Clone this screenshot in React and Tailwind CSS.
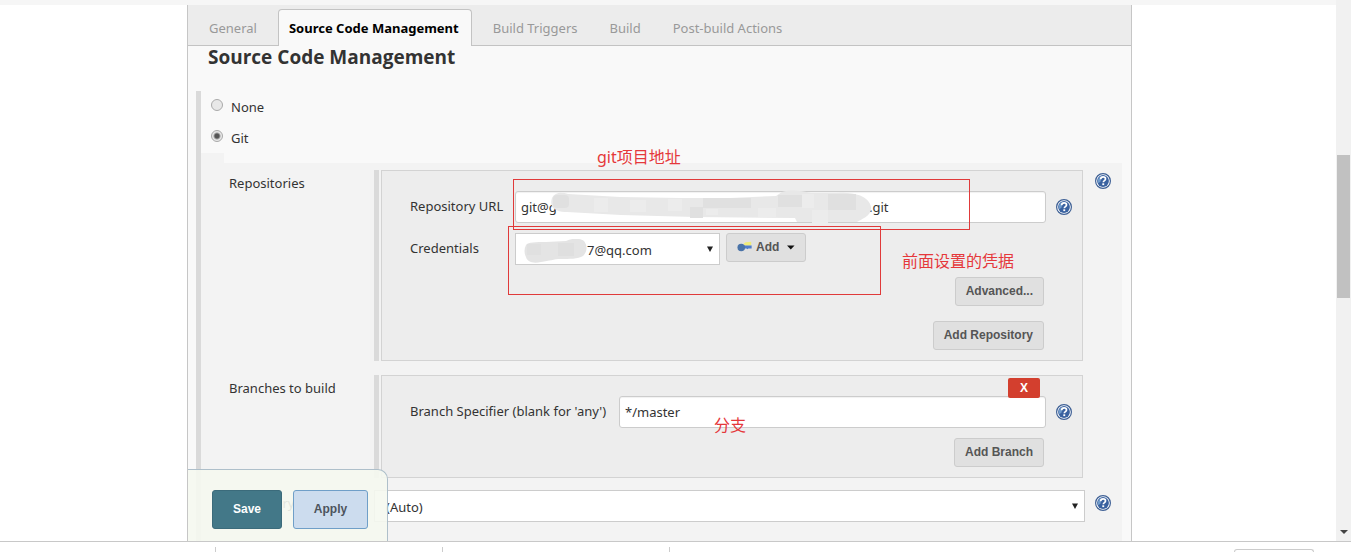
import { useState } from 'react';
import { clsx } from 'clsx';

const TABS = ['General', 'Source Code Management', 'Build Triggers', 'Build', 'Post-build Actions'];

const inputCls =
  'h-8 min-w-0 flex-1 rounded-[3px] border border-[#ccc] bg-white px-[5px] text-[13px] text-[#333] shadow-[inset_0_1px_1px_rgba(0,0,0,0.06)] outline-none';
const selectCls =
  'h-8 w-full appearance-none border border-[#ccc] bg-white pt-0.5 text-[13px] text-[#333] outline-none';

function HelpButton({ className }) {
  return (
    <button type="button" aria-label="Help" className={clsx('size-4 shrink-0', className)}>
      <svg viewBox="0 0 16 16" className="size-4">
        <circle cx="8" cy="8" r="7.4" fill="#fff" stroke="#3d5f94" strokeWidth="1.2" />
        <circle cx="8" cy="8" r="5.9" fill="#3a62a0" />
        <path d="M3 6.2a5.3 5.3 0 0 1 3.4-3.3L5.6 8.6 3.3 10.3A5.3 5.3 0 0 1 3 6.2z" fill="#6f9bcb" />
        <path
          d="M5.7 6.3C5.7 4.7 6.7 3.9 8.1 3.9s2.4.8 2.4 2c0 1.7-2.2 1.7-2.2 3.4"
          fill="none"
          stroke="#fff"
          strokeWidth="1.7"
        />
        <rect x="7.3" y="10.3" width="1.9" height="1.8" fill="#fff" />
      </svg>
    </button>
  );
}

function GreyButton({ children, className }) {
  return (
    <button
      type="button"
      className={clsx(
        "flex h-[29px] items-center justify-center rounded-[3px] border border-[#ccc] bg-[#e0e0e0] px-2.5 pb-0.5 font-['Liberation_Sans',sans-serif] text-xs font-bold text-[#555]",
        className
      )}
    >
      {children}
    </button>
  );
}

function SelectArrow() {
  return (
    <svg viewBox="0 0 6 6" className="pointer-events-none absolute top-[13px] right-[7px] size-1.5" fill="#222">
      <path d="M0 .5h6L3 6z" />
    </svg>
  );
}

function KeyIcon() {
  return (
    <svg viewBox="0 0 16 12" className="h-3 w-4">
      <path d="M7 2.5L9 1l6-.5v4H8z" fill="#f0ec7a" />
      <path d="M6 4.500h9.500v3H12l-1 .8-1-.8H6z" fill="#4f7ccb" />
      <circle cx="4.500" cy="6.500" r="4" fill="#4a73a8" />
    </svg>
  );
}

// mosaic strokes hiding the private parts of the values
function UrlMask() {
  return (
    <svg viewBox="0 0 324 34" className="pointer-events-none absolute -top-px left-[35px] h-[34px] w-[324px]">
      <path
        d="M2 8C5 2 12 2 18 4l52 3 60 1 50 0 46-2 6-4c10-3 20-1 29 1h26c14-1 32 2 34 14 1 9-10 12-14 15l-60 0-2-4-100-1-74-2-54-3C10 22-2 20 2 8z"
        fill="#e8e8e8"
      />
      <g fill="#e0e0e0">
        <rect x="3" y="5" width="16" height="13" rx="4" />
        <rect x="140" y="17" width="13" height="11" />
        <rect x="153" y="8" width="48" height="10" />
        <rect x="228" y="5" width="24" height="12" />
        <rect x="278" y="4" width="28" height="16" />
      </g>
      <g fill="#ececec">
        <rect x="44" y="8" width="14" height="14" />
        <rect x="80" y="10" width="16" height="12" />
        <rect x="118" y="9" width="14" height="12" />
        <rect x="156" y="19" width="12" height="6" />
        <rect x="208" y="18" width="18" height="9" />
        <rect x="252" y="4" width="12" height="14" />
        <rect x="262" y="20" width="16" height="13" />
      </g>
    </svg>
  );
}

function UserMask() {
  return (
    <svg viewBox="0 0 64 25" className="pointer-events-none absolute top-1.5 left-[9px] h-[25px] w-16">
      <path d="M2 6C4 3 12 3 22 3l20-1c6-3 14-3 18 0 4 5 3 11-1 15-5 3-14 3-22 3-8 0-11 2-20 3C8 25 3 22 2 18 0 14 0 10 2 6z" fill="#e4e4e4" />
      <rect x="3" y="5" width="14" height="11" fill="#e0e0e0" />
      <rect x="34" y="4" width="16" height="13" fill="#dfdfdf" />
    </svg>
  );
}

function Row({ label, children, help }) {
  return (
    <div className="flex">
      <div className="w-[145px] shrink-0 pt-[3px]">{label}</div>
      <div className="flex min-w-0 flex-1">{children}</div>
      <div className="w-[39px] shrink-0 pl-3">{help}</div>
    </div>
  );
}

function Panel({ children, className }) {
  return (
    <div className="flex min-w-0 flex-1 gap-0.5">
      <div className="w-[5px] shrink-0 bg-[#dadada]" />
      <div className={clsx('relative min-w-0 flex-1 border border-[#d3d3d3] bg-[#ededed] pr-9 pl-7', className)}>
        {children}
      </div>
    </div>
  );
}

function Repositories() {
  const [url, setUrl] = useState('git@g');
  return (
    <Row label="Repositories" help={<HelpButton className="mt-[3px]" />}>
      <Panel className="pt-5 pb-2.5">
        <div className="flex items-center">
          <label htmlFor="repo-url" className="w-[105px] shrink-0 pb-0.5">Repository URL</label>
          <div className="relative flex min-w-0 flex-1">
            <input id="repo-url" value={url} onChange={(e) => setUrl(e.target.value)} className={inputCls} />
            <span className="pointer-events-none absolute top-1.5 left-[354px]">.git</span>
            <UrlMask />
          </div>
          <HelpButton className="-mr-[26px] ml-2.5" />
        </div>
        <div className="mt-2.5 flex items-start">
          <label htmlFor="credentials" className="w-[105px] shrink-0 pt-[5px]">Credentials</label>
          <div className="relative w-[205px]">
            <select id="credentials" className={clsx(selectCls, 'pl-[71px]')}>
              <option>7@qq.com</option>
            </select>
            <UserMask />
            <SelectArrow />
          </div>
          <GreyButton className="ml-1.5 w-20 gap-1 px-2">
            <KeyIcon />
            Add
            <svg viewBox="0 0 8 5" className="mt-0.5 ml-1 h-[5px] w-2" fill="#111">
              <path d="M0 .5h8L4 4.5z" />
            </svg>
          </GreyButton>
        </div>
        <div className="mt-3 mr-0.5 flex flex-col items-end gap-[15px]">
          <GreyButton>Advanced...</GreyButton>
          <GreyButton>Add Repository</GreyButton>
        </div>

        <div className="pointer-events-none absolute top-2 left-[131px] h-[51px] w-[457px] border border-[#e03a3a]" />
        <div className="pointer-events-none absolute top-[55px] left-[126px] h-[69px] w-[373px] border border-[#e03a3a]" />
        <p className="absolute -top-6 left-[215px] text-base leading-5 text-[#e5383b]">git项目地址</p>
        <p className="absolute top-20 left-[520px] text-base leading-5 text-[#e5383b]">前面设置的凭据</p>
      </Panel>
    </Row>
  );
}

function Branches() {
  const [spec, setSpec] = useState('*/master');
  return (
    <Row label="Branches to build">
      <Panel className="pt-5 pb-2.5">
        <button
          type="button"
          aria-label="Delete branch"
          className="absolute top-0.5 right-[42px] h-5 w-8 rounded-xs bg-[#d33f2e] font-['Liberation_Sans',sans-serif] text-xs font-bold text-white"
        >
          X
        </button>
        <div className="flex items-center">
          <label htmlFor="branch-spec" className="w-[209px] shrink-0 pb-0.5">Branch Specifier (blank for 'any')</label>
          <input id="branch-spec" value={spec} onChange={(e) => setSpec(e.target.value)} className={inputCls} />
          <HelpButton className="-mr-[26px] ml-2.5" />
        </div>
        <div className="mt-2.5 mr-0.5 flex justify-end">
          <GreyButton>Add Branch</GreyButton>
        </div>
        <p className="absolute top-[39px] left-[332px] text-base leading-5 text-[#e5383b]">分支</p>
      </Panel>
    </Row>
  );
}

function ScmForm() {
  const [scm, setScm] = useState('git');
  return (
    <section className="flex-1 pr-[9px] pl-2">
      <h2 className="pl-3 font-['Open_Sans',sans-serif] text-[19px] leading-[22px] font-bold text-[#333]">
        Source Code Management
      </h2>
      <div className="mt-[23px] flex h-full">
        <div className="w-[5px] shrink-0 bg-[#dadada]" />
        <div className="min-w-0 flex-1">
          {['None', 'Git'].map((name) => (
            <label key={name} className="flex h-[31px] items-center gap-2 pl-2.5">
              <input
                type="radio"
                name="scm"
                checked={scm === name.toLowerCase()}
                onChange={() => setScm(name.toLowerCase())}
                className="mb-1 size-3 appearance-none rounded-full border border-[#aaa] bg-[#e8e8e8] checked:bg-[radial-gradient(circle,#555_0_2px,#e8e8e8_4px)]"
              />
              {name}
            </label>
          ))}
          <div className="h-2.5 w-[23px] bg-[#f3f3f3]" />
          <div className="flex h-full flex-col gap-3.5 bg-[#f3f3f3] pt-[7px] pl-7">
            <Repositories />
            <Branches />
            <div className="-mt-0.5">
              <Row label={<label htmlFor="browser">Repository browser</label>} help={<HelpButton className="mt-[5px]" />}>
                <div className="relative -mr-0.5 flex-1">
                  <select id="browser" className={clsx(selectCls, 'pl-[11px]')}>
                    <option>(Auto)</option>
                  </select>
                  <SelectArrow />
                </div>
              </Row>
            </div>
          </div>
        </div>
      </div>
    </section>
  );
}

export default function App() {
  return (
    <div className="flex h-screen flex-col overflow-hidden bg-white font-['Noto_Sans','Noto_Sans_CJK_SC',sans-serif] text-[13px] leading-5 text-[#333]">
      <div className="flex min-h-0 flex-1 border-b border-[#c8c8c8]">
        <div className="flex min-w-0 flex-1 flex-col">
          <div className="h-[5px] shrink-0 bg-[#f6f6f6]" />
          <main className="relative mr-[204px] ml-[187px] flex min-h-0 flex-1 flex-col overflow-hidden border-x border-[#c6c6c6] bg-[#f9f9f9]">
            <nav className="flex h-[41px] shrink-0 items-end gap-2.5 border-b border-[#c3c3c3] bg-[#ececec] pl-2.5">
              {TABS.map((tab, i) => (
                <a
                  key={tab}
                  href="#scm"
                  className={clsx(
                    'rounded-t border border-b-0 pt-2 pl-2.5',
                    i === 1
                      ? '-mb-px h-[37px] border-[#c3c3c3] bg-[#f9f9f9] pr-3 font-bold text-black'
                      : 'h-9 border-transparent pr-2.5 text-[#999]'
                  )}
                >
                  {tab}
                </a>
              ))}
            </nav>
            <ScmForm />
            <div className="absolute bottom-0 left-0 flex h-[72px] w-[200px] gap-[11px] rounded-tr-[10px] border-t border-r border-[#aebfca] bg-[#f5f8f0]/90 pt-5 pl-6 font-['Liberation_Sans',sans-serif] text-xs font-bold">
              <button type="submit" className="h-[39px] w-[70px] rounded-[3px] border border-[#3b6b7b] bg-[#437888] pb-0.5 text-white">
                Save
              </button>
              <button type="button" className="h-[39px] w-[75px] rounded-[3px] border border-[#6f9fc8] bg-[#ccdcee] pb-0.5 text-[#4d545d]">
                Apply
              </button>
            </div>
          </main>
        </div>
        <div className="flex w-[15px] shrink-0 flex-col items-center justify-between bg-[#f1f1f1] pt-[155px] pb-[7px]">
          <div className="h-[143px] w-[13px] bg-[#c1c1c1]" />
          <svg viewBox="0 0 8 4" className="h-1 w-2" fill="#444">
            <path d="M0 0h8L4 4z" />
          </svg>
        </div>
      </div>
      <footer className="flex h-2.5 shrink-0 items-end pr-[37px]">
        <div className="h-[5px] w-[216px] border-r border-[#ccc]" />
        <div className="h-[5px] w-[227px] border-r border-[#ccc]" />
        <div className="h-[5px] w-[227px] border-r border-[#ccc]" />
        <div className="ml-auto h-[3px] w-20 rounded-t border border-b-0 border-[#ccc]" />
      </footer>
    </div>
  );
}
